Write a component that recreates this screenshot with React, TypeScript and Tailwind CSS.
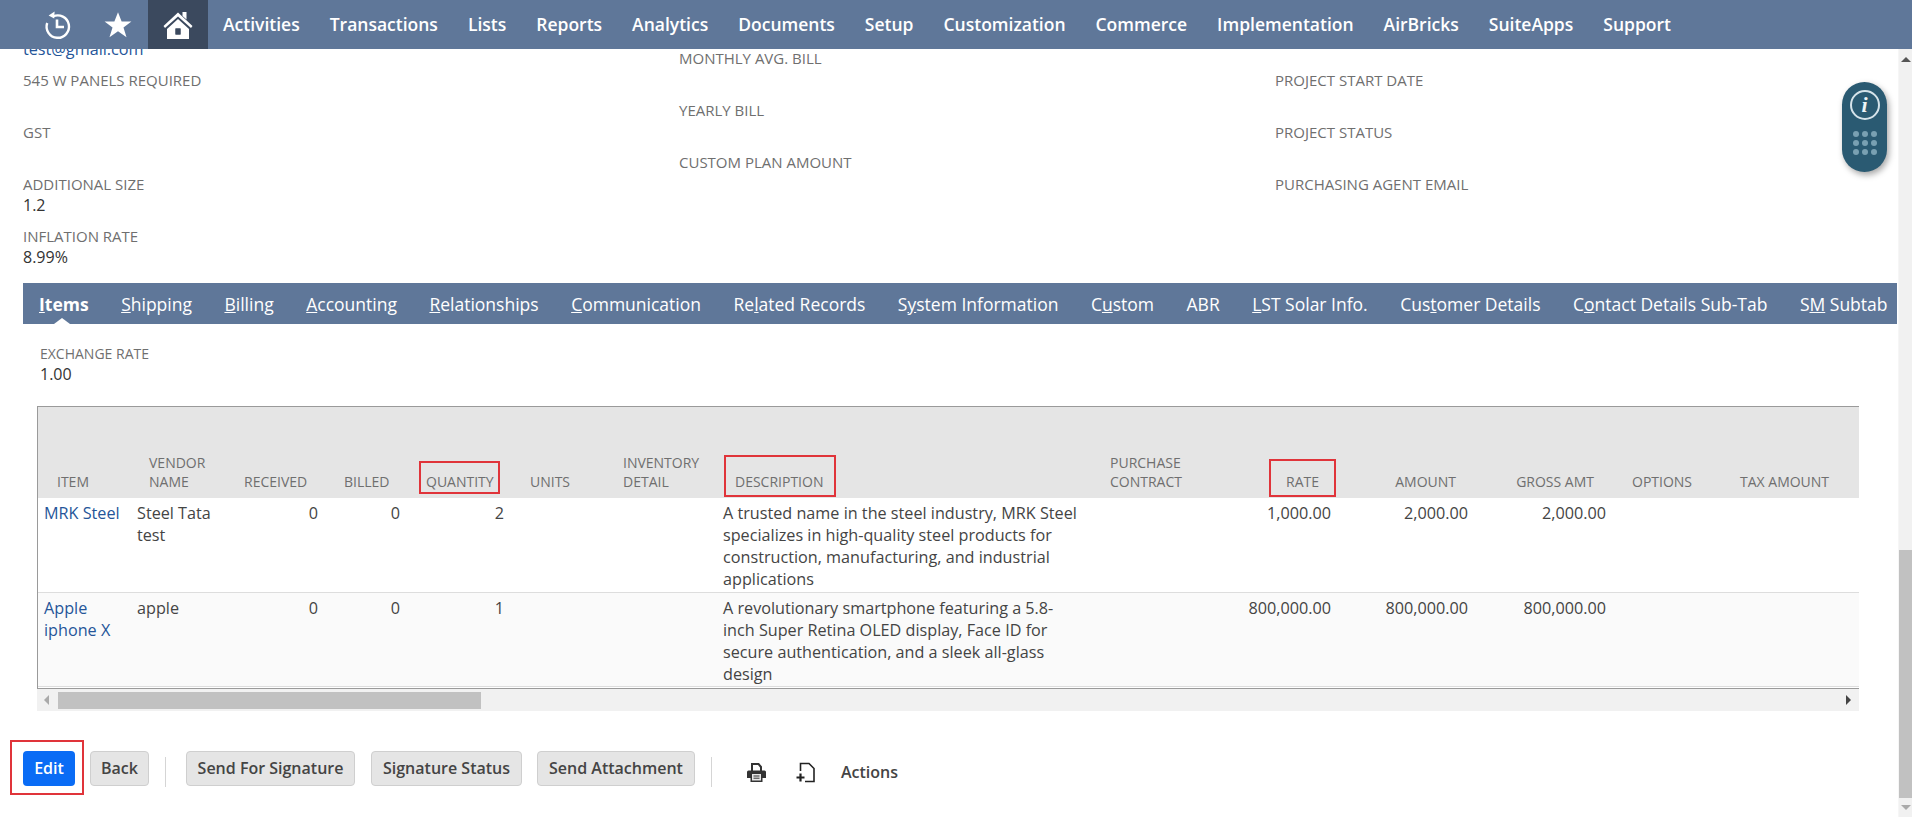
const font = { fontFamily: '"Open Sans", sans-serif' };

const navItems: string[] = ["Activities", "Transactions", "Lists", "Reports", "Analytics", "Documents", "Setup", "Customization", "Commerce", "Implementation", "AirBricks", "SuiteApps", "Support"];

function HistoryIcon() {
  return (
    <svg width="28" height="30" viewBox="0 0 28 30" fill="none" stroke="white" strokeWidth="2.4">
      <path d="M9 6.5A11.2 11.2 0 1 1 3.2 13" />
      <path d="M10.6 1.5 L10.2 8.6 L4.6 5.5 Z" fill="white" stroke="none" />
      <path d="M13 9.5V17H20" strokeWidth="2.6" />
    </svg>
  );
}
function StarIcon() {
  return (
    <svg width="28" height="28" viewBox="0 0 24 24" fill="white">
      <path d="M12 1l3.1 8h8.4l-6.8 5.2 2.6 8.3L12 17.3l-7.3 5.2 2.6-8.3L.5 9h8.4z" />
    </svg>
  );
}
function HomeIcon() {
  return (
    <svg width="30" height="28" viewBox="0 0 30 28" fill="white">
      <path d="M19.5 1H23.5V8.5L19.5 5Z" />
      <path d="M15 1.5L29.5 15L28 17L15 5.4L2 17L.5 15Z" />
      <path fillRule="evenodd" d="M15 8L26 18V28H4V18ZM12.5 17.5V23.5H17.5V17.5Z" />
      <rect x="12.5" y="17.5" width="5" height="6" fill="#3b495e" />
    </svg>
  );
}
function PrintIcon() {
  return (
    <svg width="21" height="21" viewBox="0 0 21 21">
      <path d="M5 1H13L16 4.5V9H14V5.5L12 3H7V9H5Z" fill="#333" />
      <path d="M2.5 8.5H18.5A1.5 1.5 0 0 1 20 10V16H16.5V20H4.5V16H1V10A1.5 1.5 0 0 1 2.5 8.5Z" fill="#333" />
      <rect x="6" y="12" width="9" height="6.5" fill="#e8e8e8" />
      <path d="M7.5 14H13.5M7.5 16.2H13.5" stroke="#333" strokeWidth="1" />
    </svg>
  );
}
function AddDocIcon() {
  return (
    <svg width="21" height="21" viewBox="0 0 21 21" fill="none" stroke="#222" strokeWidth="1.6">
      <path d="M4.5 9V1.5H13L18 6.5V19.5H9" />
      <path d="M.5 15.5H8.5M4.5 11.5V19.5" strokeWidth="2.2" />
    </svg>
  );
}
function InfoWidget() {
  return (
    <div className="absolute left-[1842px] top-[82px] w-[45px] h-[90px] rounded-[23px] bg-[#2a5a72] shadow-[2px_3px_6px_rgba(0,0,0,0.35)] flex flex-col items-center pt-[8px]">
      <div className="w-[30px] h-[30px] rounded-full border-2 border-[#d5e3ea] flex items-center justify-center text-[#eef4f6] text-[22px] font-bold italic leading-none" style={{ fontFamily: '"Liberation Serif", serif' }}>i</div>
      <div className="grid grid-cols-3 gap-x-[3px] gap-y-[3px] mt-[11px]">
        {Array.from({ length: 9 }).map((_, i) => (
          <span key={i} className="w-[6px] h-[6px] rounded-full bg-[#79a0b2]" />
        ))}
      </div>
    </div>
  );
}

const tabs: { label: string; u: number }[] = [
  { label: "Items", u: 0 }, { label: "Shipping", u: 0 }, { label: "Billing", u: 0 }, { label: "Accounting", u: 0 },
  { label: "Relationships", u: 0 }, { label: "Communication", u: 0 }, { label: "Related Records", u: 2 },
  { label: "System Information", u: 1 }, { label: "Custom", u: 1 }, { label: "ABR", u: -1 }, { label: "LST Solar Info.", u: 0 },
  { label: "Customer Details", u: 3 }, { label: "Contact Details Sub-Tab", u: 1 }, { label: "SM Subtab", u: 1 },
];

function TabLabel({ label, u }: { label: string; u: number }) {
  if (u < 0) return <>{label}</>;
  return <>{label.slice(0, u)}<span className="underline">{label[u]}</span>{label.slice(u + 1)}</>;
}

const colWidths = [92, 95, 100, 82, 104, 93, 112, 375, 119, 128, 137, 138, 108, 138];
const headers: { t: string[]; r?: boolean }[] = [
  { t: ["ITEM"] }, { t: ["VENDOR", "NAME"] }, { t: ["RECEIVED"], r: true }, { t: ["BILLED"], r: true }, { t: ["QUANTITY"], r: true }, { t: ["UNITS"] },
  { t: ["INVENTORY", "DETAIL"] }, { t: ["DESCRIPTION"] }, { t: ["PURCHASE", "CONTRACT"] }, { t: ["RATE"], r: true }, { t: ["AMOUNT"], r: true },
  { t: ["GROSS AMT"], r: true }, { t: ["OPTIONS"] }, { t: ["TAX AMOUNT"] },
];

type Row = { item: string; vendor: string; qty: string; desc: string; rate: string; amount: string; gross: string; bg: string; };
const rows: Row[] = [
  { item: "MRK Steel", vendor: "Steel Tata test", qty: "2", desc: "A trusted name in the steel industry, MRK Steel specializes in high-quality steel products for construction, manufacturing, and industrial applications", rate: "1,000.00", amount: "2,000.00", gross: "2,000.00", bg: "bg-white" },
  { item: "Apple iphone X", vendor: "apple", qty: "1", desc: "A revolutionary smartphone featuring a 5.8-inch Super Retina OLED display, Face ID for secure authentication, and a sleek all-glass design", rate: "800,000.00", amount: "800,000.00", gross: "800,000.00", bg: "bg-[#fafafa]" },
];

function Field({ label, value }: { label: string; value?: string }) {
  return (
    <div className="h-[52px]">
      <div className="text-[15px] leading-[20px] text-[#6f6f6f] uppercase">{label}</div>
      {value && <div className="mt-[1px] text-[16px] leading-[20px] text-[#333]">{value}</div>}
    </div>
  );
}

function Btn({ children, w, primary }: { children: string; w: number; primary?: boolean }) {
  return (
    <button
      style={{ width: w }}
      className={`h-[35px] rounded-[4px] text-[16px] font-semibold pb-[2px] flex items-center justify-center whitespace-nowrap ${primary ? "bg-[#0a6cf5] text-white" : "bg-[#e5e5e5] border border-[#cfcfcf] text-[#444]"}`}
    >
      {children}
    </button>
  );
}

export default function App() {
  return (
    <div className="relative w-[1912px] h-[817px] overflow-hidden bg-white" style={font}>
      {/* top nav */}
      <div className="absolute inset-x-0 top-0 h-[49px] bg-[#5f7799] z-10 flex items-center">
        <div className="w-[88px] flex justify-end"><div className="w-[60px] flex justify-center"><HistoryIcon /></div></div>
        <div className="w-[60px] flex justify-center"><StarIcon /></div>
        <div className="w-[60px] h-full bg-[#3b495e] flex items-center justify-center"><HomeIcon /></div>
        <div className="flex ml-[15px] gap-[30px] text-white text-[17.5px] font-semibold whitespace-nowrap">
          {navItems.map((n) => <span key={n}>{n}</span>)}
        </div>
      </div>

      {/* page scrollbar */}
      <div className="absolute right-0 top-[49px] bottom-0 w-[14px] bg-[#f1f1f1] border-l border-l-[#f6f6f6]">
        <div className="mx-auto mt-[8px] w-0 h-0 border-x-[5px] border-x-transparent border-b-[5px] border-b-[#555]" />
        <div className="absolute left-0 right-0 top-[501px] h-[248px] bg-[#c1c1c1]" />
        <div className="absolute left-[2px] bottom-[7px] w-0 h-0 border-x-[5px] border-x-transparent border-t-[5px] border-t-[#aaa]" />
      </div>

      {/* fields */}
      <div className="absolute left-[23px] top-[37px] w-[600px]">
        <div className="h-[32px] mt-[1px] text-[16.2px] leading-[22px] text-[#255599]">test@gmail.com</div>
        <Field label="545 W Panels Required" />
        <Field label="GST" />
        <Field label="Additional Size" value="1.2" />
        <Field label="Inflation Rate" value="8.99%" />
      </div>
      <div className="absolute left-[679px] top-[48px] w-[500px]">
        <Field label="Monthly Avg. Bill" />
        <Field label="Yearly Bill" />
        <Field label="Custom Plan Amount" />
      </div>
      <div className="absolute left-[1275px] top-[70px] w-[500px]">
        <Field label="Project Start Date" />
        <Field label="Project Status" />
        <Field label="Purchasing Agent Email" />
      </div>
      <InfoWidget />

      {/* tabs */}
      <div className="absolute left-[23px] top-[283px] w-[1874px] h-[41px] pt-[1px] bg-[#5f7799] flex items-center pl-[16px] gap-[32.5px] text-white text-[17.5px] whitespace-nowrap">
        {tabs.map((t, i) => (
          <span key={t.label} className={i === 0 ? "font-bold relative" : ""}>
            <TabLabel label={t.label} u={t.u} />
            {i === 0 && <span className="absolute left-[15px] top-[27px] w-0 h-0 border-x-[8px] border-x-transparent border-b-[6px] border-b-white" />}
          </span>
        ))}
      </div>

      <div className="absolute left-[40px] top-[344px]">
        <div className="text-[14px] leading-[20px] text-[#6f6f6f]">EXCHANGE RATE</div>
        <div className="text-[16px] leading-[21px] text-[#333]">1.00</div>
      </div>

      {/* table */}
      <div className="absolute left-[37px] top-[406px] w-[1822px] h-[283px] border border-[#9a9a9a] border-r-0 overflow-hidden">
        <table className="table-fixed border-collapse w-[1821px]">
          <colgroup>
            {colWidths.map((w, i) => <col key={i} style={{ width: w }} />)}
          </colgroup>
          <thead>
            <tr className="h-[91px] bg-[#e5e5e5]">
              {headers.map((h, i) => (
                <th key={i} className={`align-bottom font-normal text-[14px] leading-[19px] text-[#6f6f6f] pb-[7px] px-[19px] whitespace-nowrap ${h.r ? "text-right" : "text-left"}`}>
                  {h.t.map((l) => <div key={l}>{l}</div>)}
                </th>
              ))}
            </tr>
          </thead>
          <tbody className="text-[16.2px] leading-[22px] text-[#444]">
            {rows.map((r, ri) => (
              <tr key={ri} className={`${r.bg} border-b border-[#ddd] h-[94px] align-top`}>
                <td className="pl-[6px] pr-[7px] pt-[4px] text-[#255599]">{r.item}</td>
                <td className="px-[7px] pt-[4px]">{r.vendor}</td>
                <td className="px-[7px] pt-[4px] text-right">0</td>
                <td className="px-[7px] pt-[4px] text-right">0</td>
                <td className="px-[7px] pt-[4px] text-right">{r.qty}</td>
                <td />
                <td />
                <td className="px-[7px] pt-[4px]">{r.desc}</td>
                <td />
                <td className="px-[7px] pt-[4px] text-right">{r.rate}</td>
                <td className="px-[7px] pt-[4px] text-right">{r.amount}</td>
                <td className="px-[7px] pt-[4px] text-right">{r.gross}</td>
                <td />
                <td />
              </tr>
            ))}
          </tbody>
        </table>
      </div>

      {/* table scrollbar */}
      <div className="absolute left-[37px] top-[689px] w-[1822px] h-[22px] bg-[#f1f1f1] flex items-center">
        <div className="ml-[7px] w-0 h-0 border-y-[5px] border-y-transparent border-r-[5px] border-r-[#aaa]" />
        <div className="ml-[9px] w-[423px] h-[17px] bg-[#c1c1c1]" />
        <div className="ml-auto mr-[8px] w-0 h-0 border-y-[5px] border-y-transparent border-l-[5px] border-l-[#444]" />
      </div>

      {/* buttons */}
      <div className="absolute left-[23px] top-[751px] flex items-start">
        <Btn w={52} primary>Edit</Btn>
        <div className="ml-[15px]"><Btn w={59}>Back</Btn></div>
        <div className="ml-[16px] mt-[6px] w-px h-[30px] bg-[#d5d5d5]" />
        <div className="ml-[20px]"><Btn w={169}>Send For Signature</Btn></div>
        <div className="ml-[16px]"><Btn w={151}>Signature Status</Btn></div>
        <div className="ml-[15px]"><Btn w={158}>Send Attachment</Btn></div>
        <div className="ml-[16px] mt-[6px] w-px h-[30px] bg-[#d5d5d5]" />
        <div className="ml-[34px] mt-[9px] flex items-center">
          <PrintIcon />
          <div className="ml-[29px]"><AddDocIcon /></div>
          <span className="ml-[24px] text-[16px] font-semibold text-[#444]">Actions</span>
        </div>
      </div>

      {/* annotations */}
      <div className="absolute left-[419px] top-[461px] w-[81px] h-[33px] border-2 border-[#e0343a]" />
      <div className="absolute left-[724px] top-[455px] w-[112px] h-[42px] border-2 border-[#e0343a]" />
      <div className="absolute left-[1269px] top-[459px] w-[67px] h-[38px] border-2 border-[#e0343a]" />
      <div className="absolute left-[10px] top-[740px] w-[74px] h-[55px] border-2 border-[#e0343a]" />
    </div>
  );
}
